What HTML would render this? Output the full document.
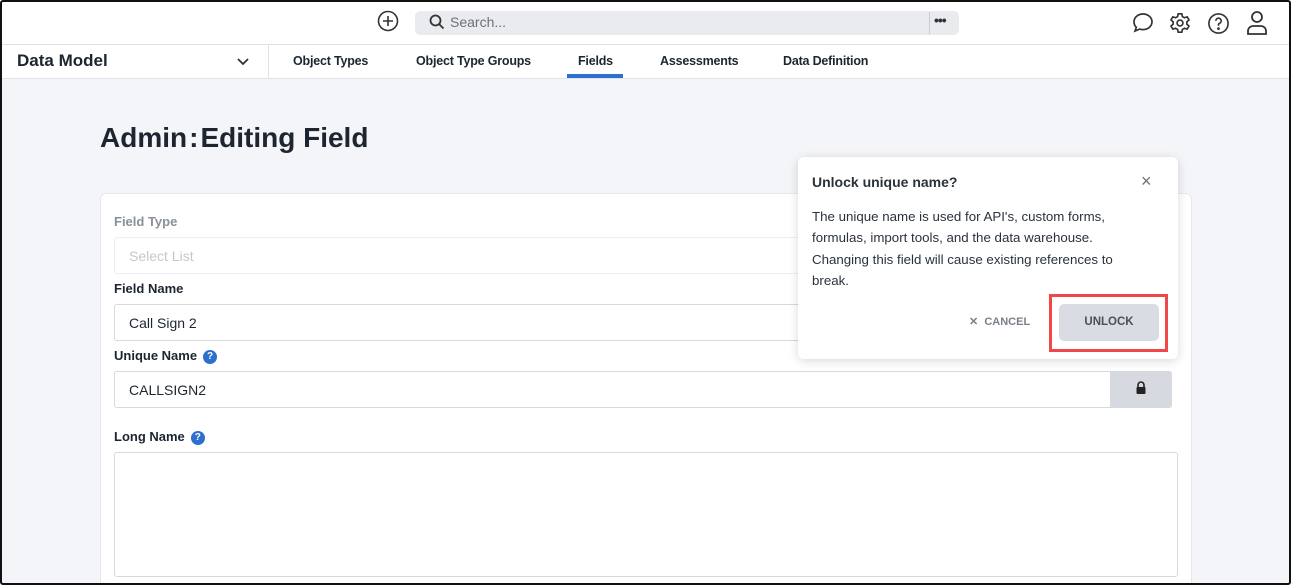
<!DOCTYPE html><html style="width:1291px;height:585px;overflow:hidden"><head><style>
*{box-sizing:border-box;margin:0;padding:0}
body{width:1291px;height:585px;overflow:hidden;font-family:"Liberation Sans",sans-serif;background:#f4f5f8;position:relative;color:#1d2530}
.frame{position:absolute;left:0;top:0;width:1291px;height:585px;border:2px solid #111;border-radius:3px;pointer-events:none;z-index:10}
.top{position:absolute;left:0;top:0;width:1291px;height:45px;background:#fff;border-bottom:1px solid #dfe2e6}
.nav{position:absolute;left:0;top:45px;width:1291px;height:34px;background:#fff;border-bottom:1px solid #dfe2e6}
.abs{position:absolute}
.lbl{position:absolute;font-size:13px;font-weight:bold;color:#1d2530}
.inp{position:absolute;background:#fff;border:1px solid #d6d9de;border-radius:3px;font-size:14px;padding-left:14px;display:flex;align-items:center}
.q{display:inline-block;width:14px;height:14px;border-radius:50%;background:#2d6fcf;color:#fff;font-size:10px;text-align:center;line-height:14px;margin-left:6px;vertical-align:1px}
.nt{position:absolute;top:9px;font-size:12.5px;font-weight:bold;letter-spacing:-0.2px}
</style></head><body>
<div class="top">
<svg class="abs" style="left:377px;top:10px" width="22" height="22" viewBox="0 0 22 22" fill="none" stroke="#333" stroke-width="1.6"><circle cx="11" cy="11" r="9.5"/><path d="M11 6v10M6 11h10"/></svg>
<div class="abs" style="left:415px;top:11px;width:544px;height:24px;background:#e9ebef;border-radius:5px"></div>
<svg class="abs" style="left:429px;top:14px" width="16" height="16" viewBox="0 0 16 16" fill="none" stroke="#333" stroke-width="1.8"><circle cx="6.5" cy="6.5" r="5"/><path d="M10 10l4.5 4.5"/></svg>
<div class="abs" style="left:450px;top:14px;font-size:14px;color:#6b717a">Search...</div>
<div class="abs" style="left:929px;top:12px;width:1px;height:22px;background:#c9ccd2"></div>
<div class="abs" style="left:934px;top:12px;font-size:14px;color:#333;letter-spacing:-1px;font-weight:bold">•••</div>
<svg class="abs" style="left:1131px;top:11px" width="24" height="24" viewBox="0 0 24 24" fill="none" stroke="#333" stroke-width="1.7"><path d="M12 3c5 0 9 3.4 9 7.8s-4 7.8-9 7.8c-1.2 0-2.3-.2-3.3-.5L4 20l1.3-3.6C3.8 15 3 13 3 10.8 3 6.4 7 3 12 3z"/></svg>
<svg class="abs" style="left:1169px;top:12px" width="22" height="22" viewBox="0 0 24 24" fill="none" stroke="#333" stroke-width="1.8"><circle cx="12" cy="12" r="3.2"/><path d="M10 2h4l.6 3 2.3 1.3 2.9-1 2 3.4-2.3 2v2.6l2.3 2-2 3.4-2.9-1-2.3 1.3-.6 3h-4l-.6-3-2.3-1.3-2.9 1-2-3.4 2.3-2v-2.6l-2.3-2 2-3.4 2.9 1L9.4 5z"/></svg>
<svg class="abs" style="left:1207px;top:12px" width="23" height="23" viewBox="0 0 24 24" fill="none" stroke="#333" stroke-width="1.7"><circle cx="12" cy="12" r="10"/><path d="M9.2 9.3a2.8 2.8 0 1 1 3.8 2.6c-.7.3-1 .9-1 1.6v.8"/><circle cx="12" cy="17.3" r=".6" fill="#333"/></svg>
<svg class="abs" style="left:1245px;top:10px" width="24" height="26" viewBox="0 0 24 26" fill="none" stroke="#333" stroke-width="1.8"><circle cx="12" cy="7" r="5"/><path d="M3 24v-3c0-3 2.5-5 5.5-5h7c3 0 5.5 2 5.5 5v3z"/></svg>
</div>
<div class="nav">
<div class="abs" style="left:17px;top:6px;font-size:17px;font-weight:bold">Data Model</div>
<svg class="abs" style="left:236px;top:12px" width="14" height="10" viewBox="0 0 14 10" fill="none" stroke="#333" stroke-width="1.8"><path d="M2 2l5 5 5-5"/></svg>
<div class="abs" style="left:268px;top:0;width:1px;height:33px;background:#dfe2e6"></div>
<div class="nt" style="left:293px">Object Types</div>
<div class="nt" style="left:416px">Object Type Groups</div>
<div class="nt" style="left:578px">Fields</div>
<div class="abs" style="left:567px;top:29px;width:56px;height:4px;background:#2d6fcf"></div>
<div class="nt" style="left:660px">Assessments</div>
<div class="nt" style="left:783px">Data Definition</div>
</div>
<div class="abs" style="left:100px;top:122px;font-size:28px;font-weight:bold">Admin<span style="margin:0 2px">:</span>Editing Field</div>
<div class="abs" style="left:100px;top:193px;width:1092px;height:400px;background:#fff;border-radius:6px;border:1px solid #e6e8ec"></div>
<div class="lbl" style="left:114px;top:214px;color:#8a9099">Field Type</div>
<div class="inp" style="left:114px;top:237px;width:700px;height:37px;color:#c4c8ce;border-color:#eceef1">Select List</div>
<div class="lbl" style="left:114px;top:281px">Field Name</div>
<div class="inp" style="left:114px;top:304px;width:700px;height:37px">Call Sign 2</div>
<div class="lbl" style="left:114px;top:348px">Unique Name<span class="q">?</span></div>
<div class="inp" style="left:114px;top:371px;width:1058px;height:37px">CALLSIGN2</div>
<div class="abs" style="left:1110px;top:371px;width:62px;height:37px;background:#d6dae0;border-radius:0 3px 3px 0"></div>
<svg class="abs" style="left:1135px;top:381px" width="12" height="14" viewBox="0 0 12 14"><path d="M3 6V4a3 3 0 0 1 6 0v2" fill="none" stroke="#222" stroke-width="1.6"/><rect x="1.5" y="6" width="9" height="7" rx="1" fill="#222"/></svg>
<div class="lbl" style="left:114px;top:429px">Long Name<span class="q">?</span></div>
<div class="inp" style="left:114px;top:452px;width:1064px;height:125px"></div>
<div class="abs" style="left:798px;top:157px;width:380px;height:202px;background:#fff;border-radius:6px;box-shadow:0 2px 10px rgba(0,0,0,.15)">
<div class="abs" style="left:14px;top:17px;font-size:14px;font-weight:bold;color:#2a323c">Unlock unique name?</div>
<div class="abs" style="left:343px;top:14px;font-size:18px;color:#6b717a">×</div>
<div class="abs" style="left:14px;top:49px;width:330px;font-size:13.3px;line-height:21.3px;color:#2a323c">The unique name is used for API's, custom forms, formulas, import tools, and the data warehouse. Changing this field will cause existing references to break.</div>
<div class="abs" style="left:171px;top:158px;font-size:11px;font-weight:bold;color:#7a8089">✕&nbsp; CANCEL</div>
<div class="abs" style="left:261px;top:147px;width:100px;height:37px;background:#d9dce2;border-radius:5px;font-size:11.5px;font-weight:bold;color:#4a5058;text-align:center;line-height:37px">UNLOCK</div>
<div class="abs" style="left:251px;top:137px;width:119px;height:58px;border:3px solid #f0474a"></div>
</div>
<div class="frame"></div>
</body></html>
